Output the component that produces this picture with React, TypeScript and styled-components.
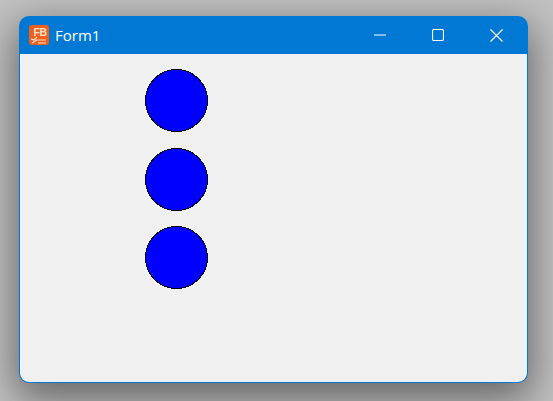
import React from "react";
import styled, { createGlobalStyle } from "styled-components";

const Global = createGlobalStyle`
  html, body { margin: 0; padding: 0; }
  body { width: 553px; height: 401px; overflow: hidden; background: #c2c2c2; }
`;

const Desktop = styled.div`
  width: 553px;
  height: 401px;
  box-sizing: border-box;
  padding: 16px 25px 18px 19px;
  background: #c2c2c2;
  overflow: hidden;
`;

const Window = styled.div`
  width: 509px;
  height: 367px;
  box-sizing: border-box;
  display: flex;
  flex-direction: column;
  border-radius: 10px;
  overflow: hidden;
  background: #0078d4;
  padding: 0 1px 1px 1px;
  box-shadow: 0 13px 40px 4px rgba(0, 0, 0, 0.48);
`;

const TitleBar = styled.div`
  height: 38px;
  flex: none;
  display: flex;
  align-items: center;
  padding-left: 9px;
  padding-right: 2px;
  color: #fff;
  font: 15px "Segoe UI", "Open Sans", "Noto Sans", sans-serif;
`;

const AppIcon = styled.div`
  position: relative;
  width: 20px;
  height: 20px;
  flex: none;
  box-sizing: border-box;
  border-radius: 3px;
  background: #ee5f1c;
  color: #fde3d2;
  font: 700 10.5px/12px "Liberation Sans", sans-serif;
  letter-spacing: -0.2px;
  text-align: right;
  padding: 1px 2px 0 0;
  overflow: hidden;
`;

const Swoosh = styled.svg`
  position: absolute;
  left: 1px;
  bottom: 1px;
`;

const Title = styled.span`
  margin-left: 6px;
  flex: 1;
`;

const Control = styled.button`
  width: 58px;
  height: 38px;
  padding: 0;
  border: 0;
  background: transparent;
  display: flex;
  align-items: center;
  justify-content: center;
  color: #fff;
`;

const Client = styled.div`
  flex: 1;
  background: #f0f0f0;
  border-radius: 0 0 9px 9px;
  padding: 15px 0 0 125px;
  display: flex;
  flex-direction: column;
  gap: 15.5px;
`;

const Dot = () => (
  <svg width="63" height="63" viewBox="0 0 63 63" shapeRendering="crispEdges" style={{ display: "block" }}>
    <circle cx="31.5" cy="31.5" r="31" fill="#0000ff" stroke="#000" strokeWidth="1" />
  </svg>
);

export default function App() {
  return (
    <>
      <Global />
      <Desktop>
        <Window>
          <TitleBar>
            <AppIcon>
              FB
              <Swoosh width="18" height="9" viewBox="0 0 18 9">
                <path d="M1 4l3 1 3-3M2 8l5-3h9M8 8h8" stroke="#fde3d2" strokeWidth="1.2" fill="none" />
              </Swoosh>
            </AppIcon>
            <Title>Form1</Title>
            <Control aria-label="Minimize">
              <svg width="12" height="12" viewBox="0 0 12 12"><path d="M0 6h12" stroke="currentColor" strokeWidth="1.2" fill="none" /></svg>
            </Control>
            <Control aria-label="Maximize">
              <svg width="12" height="12" viewBox="0 0 12 12"><rect x=".5" y=".5" width="11" height="11" rx="1.5" stroke="currentColor" strokeWidth="1.2" fill="none" /></svg>
            </Control>
            <Control aria-label="Close">
              <svg width="13" height="13" viewBox="0 0 13 13"><path d="M.5.5l12 12M12.5.5l-12 12" stroke="currentColor" strokeWidth="1.2" fill="none" /></svg>
            </Control>
          </TitleBar>
          <Client>
            <Dot />
            <Dot />
            <Dot />
          </Client>
        </Window>
      </Desktop>
    </>
  );
}
